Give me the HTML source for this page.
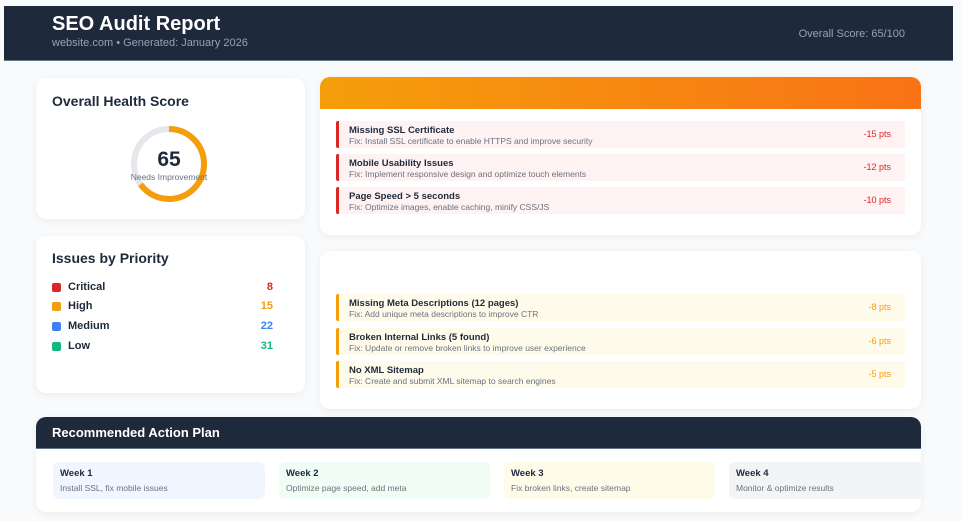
<!DOCTYPE html>
<html><head><meta charset="utf-8"><style>
*{margin:0;padding:0;box-sizing:border-box}
body{width:962px;height:521px;background:#f8fafc;font-family:"Liberation Sans",Arial,sans-serif;position:relative;overflow:hidden;color:#1e293b}
.hdr{position:absolute;left:4px;top:6px;width:949px;height:55px;background:#1e293b;border-bottom:1px solid #64748b}
.hdr h1{position:absolute;left:48px;top:7px;color:#fff;font-size:20px;font-weight:bold}
.hdr .sub{position:absolute;left:48px;top:31px;color:#94a3b8;font-size:11px}
.hdr .sc{position:absolute;right:48px;top:22px;color:#94a3b8;font-size:11px}
.card{position:absolute;background:#fff;border-radius:10px;box-shadow:0 2px 8px rgba(0,0,0,.06)}
h2{position:absolute;left:16px;font-size:14px;font-weight:bold;color:#1e293b}
.pr{position:absolute;left:16px;width:221px;font-size:11px;font-weight:bold;height:14px}
.pr i{position:absolute;left:0;top:2px;width:9px;height:9px;border-radius:2px}
.pr span{position:absolute;left:16px}
.pr b{position:absolute;right:0}
.row{position:absolute;left:16px;width:569px;height:27px;border-left:3px solid #dc2626;background:#fef2f2;border-radius:2px}
.row.y{border-color:#f59e0b;background:#fffbeb}
.row .t{position:absolute;left:10px;top:4px;font-size:9.5px;font-weight:bold;color:#1e293b}
.row .f{position:absolute;left:10px;top:15px;font-size:8.5px;color:#6b7280}
.row .p{position:absolute;right:14px;top:8px;font-size:9px;color:#dc2626}
.row.y .p{color:#f59e0b}
.wk{position:absolute;top:45px;height:37px;border-radius:6px}
.wk b{position:absolute;left:7px;top:6px;font-size:9.5px}
.wk span{position:absolute;left:7px;top:21px;font-size:8.5px;color:#6b7280}
</style></head><body>
<div class="hdr"><h1>SEO Audit Report</h1><div class="sub">website.com • Generated: January 2026</div><div class="sc">Overall Score: 65/100</div></div>

<div class="card" style="left:36px;top:78px;width:269px;height:141px">
<h2 style="top:15px">Overall Health Score</h2>
<svg style="position:absolute;left:93px;top:46px" width="80" height="80" viewBox="0 0 80 80">
<circle cx="40" cy="40" r="35" fill="none" stroke="#e5e7eb" stroke-width="6"/>
<circle cx="40" cy="40" r="35" fill="none" stroke="#f59e0b" stroke-width="6" stroke-dasharray="142.9 220" transform="rotate(-90 40 40)"/>
</svg>
<div style="position:absolute;left:93px;top:70px;width:80px;text-align:center;font-size:21px;font-weight:bold;color:#1e293b">65</div>
<div style="position:absolute;left:83px;top:94px;width:100px;text-align:center;font-size:8.5px;color:#6b7280">Needs Improvement</div>
</div>

<div class="card" style="left:36px;top:236px;width:269px;height:157px">
<h2 style="top:14px">Issues by Priority</h2>
<div class="pr" style="top:45px"><i style="background:#dc2626"></i><span>Critical</span><b style="color:#dc2626">8</b></div>
<div class="pr" style="top:64px"><i style="background:#f59e0b"></i><span>High</span><b style="color:#f59e0b">15</b></div>
<div class="pr" style="top:84px"><i style="background:#3b82f6"></i><span>Medium</span><b style="color:#3b82f6">22</b></div>
<div class="pr" style="top:104px"><i style="background:#10b981"></i><span>Low</span><b style="color:#10b981">31</b></div>
</div>

<div class="card" style="left:320px;top:77px;width:601px;height:158px;overflow:hidden">
<div style="position:absolute;left:0;top:0;width:601px;height:32px;background:linear-gradient(90deg,#f59e0b,#f97316)"></div>
<div class="row" style="top:44px"><div class="t">Missing SSL Certificate</div><div class="f">Fix: Install SSL certificate to enable HTTPS and improve security</div><div class="p">-15 pts</div></div>
<div class="row" style="top:77px"><div class="t">Mobile Usability Issues</div><div class="f">Fix: Implement responsive design and optimize touch elements</div><div class="p">-12 pts</div></div>
<div class="row" style="top:110px"><div class="t">Page Speed &gt; 5 seconds</div><div class="f">Fix: Optimize images, enable caching, minify CSS/JS</div><div class="p">-10 pts</div></div>
</div>

<div class="card" style="left:320px;top:251px;width:601px;height:158px">
<div class="row y" style="top:43px"><div class="t">Missing Meta Descriptions (12 pages)</div><div class="f">Fix: Add unique meta descriptions to improve CTR</div><div class="p">-8 pts</div></div>
<div class="row y" style="top:77px"><div class="t">Broken Internal Links (5 found)</div><div class="f">Fix: Update or remove broken links to improve user experience</div><div class="p">-6 pts</div></div>
<div class="row y" style="top:110px"><div class="t">No XML Sitemap</div><div class="f">Fix: Create and submit XML sitemap to search engines</div><div class="p">-5 pts</div></div>
</div>

<div class="card" style="left:36px;top:417px;width:885px;height:95px;overflow:hidden">
<div style="position:absolute;left:0;top:0;width:885px;height:32px;background:#1e293b;border-bottom:1px solid #64748b"></div>
<div style="position:absolute;left:16px;top:8px;color:#fff;font-size:13px;font-weight:bold">Recommended Action Plan</div>
<div class="wk" style="left:17px;width:212px;background:#eff6ff"><b>Week 1</b><span>Install SSL, fix mobile issues</span></div>
<div class="wk" style="left:243px;width:211px;background:#f0fdf4"><b>Week 2</b><span>Optimize page speed, add meta</span></div>
<div class="wk" style="left:468px;width:211px;background:#fefce8"><b>Week 3</b><span>Fix broken links, create sitemap</span></div>
<div class="wk" style="left:693px;width:200px;background:#f3f4f6"><b>Week 4</b><span>Monitor &amp; optimize results</span></div>
</div>
</body></html>
